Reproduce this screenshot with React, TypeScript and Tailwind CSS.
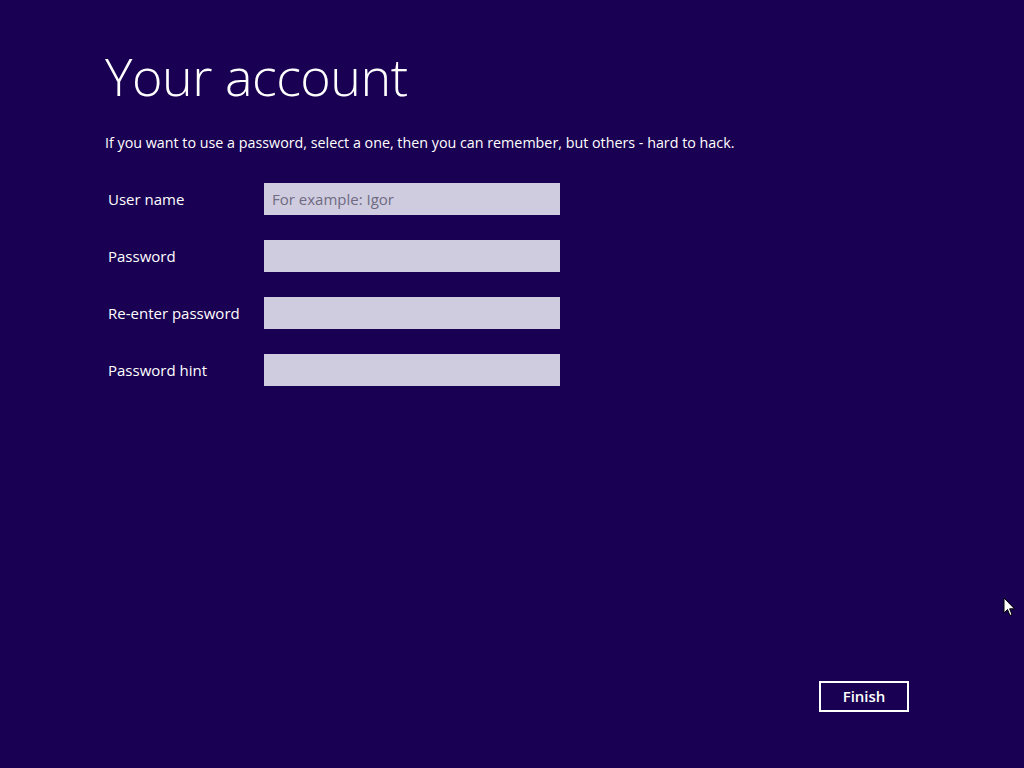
import React from 'react';

const fields = [
  { label: 'User name', placeholder: 'For example: Igor' },
  { label: 'Password', placeholder: '' },
  { label: 'Re-enter password', placeholder: '' },
  { label: 'Password hint', placeholder: '' },
];

const App: React.FC = () => {
  return (
    <div
      className="relative w-[1024px] h-[768px] bg-[#1a0052] text-white overflow-hidden flex flex-col"
      style={{ fontFamily: '"Open Sans", "Noto Sans", sans-serif' }}
    >
      <div className="pl-[105px] pt-[40px] flex-1">
        <h1 className="text-[52px] font-light leading-[72px] tracking-[-0.5px]">Your account</h1>
        <p className="mt-[20px] text-[14.3px] leading-[22px]">
          If you want to use a password, select a one, then you can remember, but others - hard to hack.
        </p>
        <div className="mt-[29px] flex flex-col gap-[25px]">
          {fields.map((f) => (
            <div key={f.label} className="flex items-center">
              <label className="w-[159px] pl-[3px] text-[15px]">{f.label}</label>
              <input
                type={f.label.startsWith('User') || f.label.endsWith('hint') ? 'text' : 'password'}
                placeholder={f.placeholder}
                className="w-[296px] h-[32px] bg-[#d0cce0] px-[8px] text-[15px] text-[#222] placeholder:text-[#6e6a80] outline-none"
              />
            </div>
          ))}
        </div>
      </div>
      <div className="flex justify-end pr-[115px] pb-[56px]">
        <button className="w-[90px] h-[31px] border-2 border-white text-[15px] font-semibold">Finish</button>
      </div>
      <svg className="absolute left-[1003px] top-[597px]" width="13" height="20" viewBox="0 0 13 20">
        <path d="M1 1 L1 16 L4.5 12.5 L7 18.5 L9 17.6 L6.6 11.8 L11.5 11.8 Z" fill="#fff" stroke="#000" strokeWidth="1" />
      </svg>
    </div>
  );
};

export default App;
